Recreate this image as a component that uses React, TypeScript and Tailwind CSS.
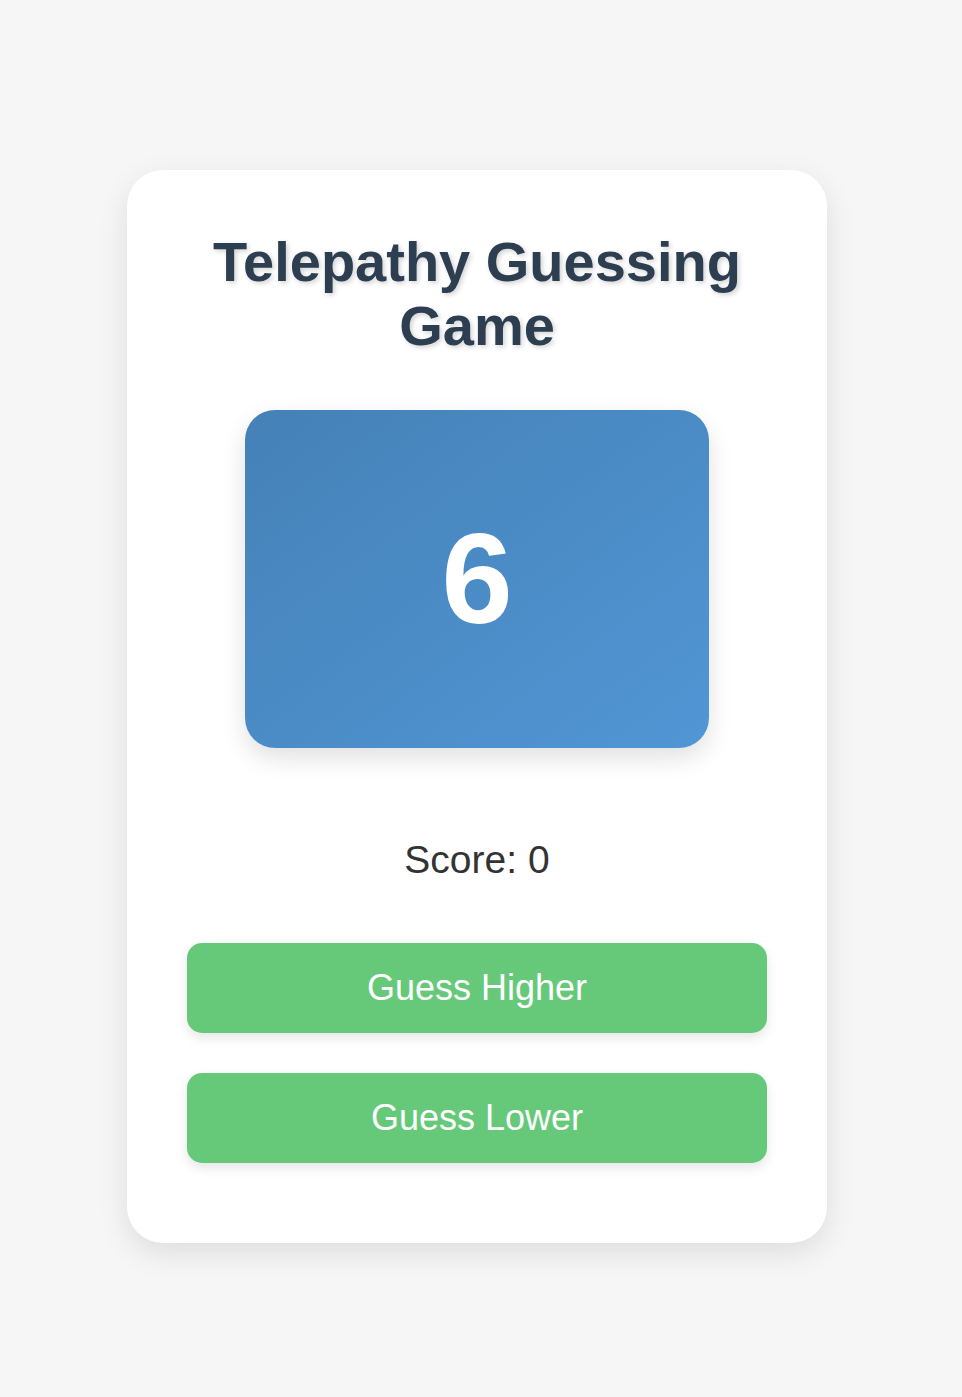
import React, { useState } from 'react';

const App: React.FC = () => {
  const [number] = useState(6);
  const [score] = useState(0);

  return (
    <div className="min-h-screen bg-[#f6f6f6] flex justify-center pt-[170px] pr-[8px] font-['Liberation_Sans',Arial,sans-serif]">
      <div className="w-[700px] h-[1073px] bg-white rounded-[36px] shadow-[0_10px_30px_rgba(0,0,0,0.1)] px-[60px] pt-[60px] flex flex-col items-center">
        <h1 className="text-[56px] leading-[64.4px] font-bold text-[#2c3e50] text-center [text-shadow:2px_2px_5px_rgba(0,0,0,0.18)]">
          Telepathy Guessing Game
        </h1>

        <div className="mt-[51px] w-[464px] h-[338px] rounded-[30px] bg-gradient-to-br from-[#4581b7] to-[#5196d5] shadow-[0_10px_25px_rgba(0,0,0,0.12)] flex items-center justify-center">
          <span className="text-white font-bold text-[128px] leading-none">{number}</span>
        </div>

        <p className="mt-[89px] text-[39px] leading-[45px] text-[#333]">Score: {score}</p>

        <div className="mt-[61px] w-full flex flex-col gap-[40px]">
          <button className="h-[90px] w-full rounded-[15px] bg-[#66c97a] text-white text-[36px] shadow-[0_5px_12px_rgba(0,0,0,0.1)]">
            Guess Higher
          </button>
          <button className="h-[90px] w-full rounded-[15px] bg-[#66c97a] text-white text-[36px] shadow-[0_5px_12px_rgba(0,0,0,0.1)]">
            Guess Lower
          </button>
        </div>
      </div>
    </div>
  );
};

export default App;
